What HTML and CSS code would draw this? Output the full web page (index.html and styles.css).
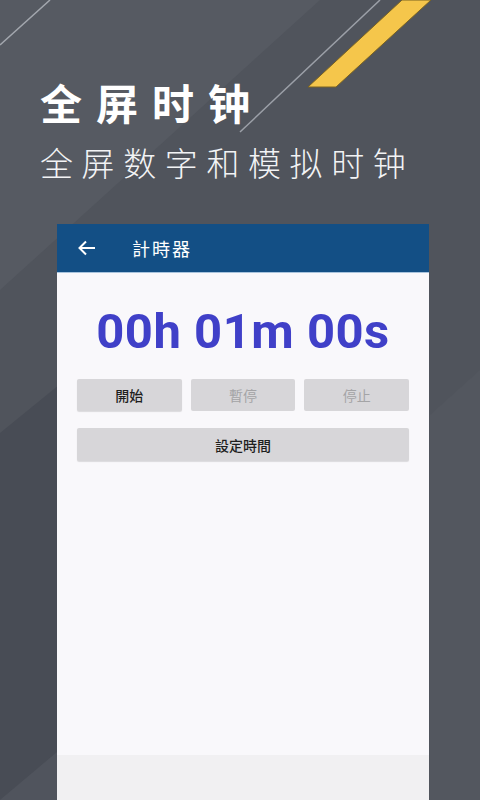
FILE: index.html
```html
<!DOCTYPE html>
<html lang="zh">
<head>
<meta charset="utf-8">
<title>全屏时钟</title>
<link rel="stylesheet" href="styles.css">
</head>
<body>
<div class="screen">
  <svg class="bg" width="480" height="800" viewBox="0 0 480 800" xmlns="http://www.w3.org/2000/svg">
    <polygon points="0,0 480,0 480,800 0,800" fill="#50545c"/>
    <polygon points="0,0 320,0 0,290" fill="#565a62"/>
    <polygon points="0,433 200,270 200,800 0,800" fill="#484c55"/>
    <polygon points="430,415 480,370 480,800 430,800" fill="#53575f"/>
    <polygon points="0,800 57,752 57,800" fill="#50545d"/>
    <line x1="50" y1="0" x2="0" y2="45" stroke="#a3a7ae" stroke-width="1.5"/>
    <line x1="380" y1="0" x2="240" y2="132" stroke="#9ca0a8" stroke-width="1.5"/>
    <polygon points="402,0 431,0 336,87 308,87" fill="#f5c64b" stroke="#7a6322" stroke-width="1"/>
  </svg>
  <div class="hero">
    <h1 class="title">全屏时钟</h1>
    <p class="subtitle">全屏数字和模拟时钟</p>
  </div>
  <div class="phone">
    <div class="appbar">
      <svg class="back" width="18" height="16" viewBox="0 0 18 16" xmlns="http://www.w3.org/2000/svg">
        <path d="M17 8H2M8 1.5L1.5 8L8 14.5" fill="none" stroke="#ffffff" stroke-width="2"/>
      </svg>
      <span class="appbar-title">計時器</span>
    </div>
    <div class="content">
      <div class="timer">00h 01m 00s</div>
      <div class="btn-row">
        <div class="btn">開始</div>
        <div class="btn disabled">暫停</div>
        <div class="btn disabled">停止</div>
      </div>
      <div class="btn wide">設定時間</div>
    </div>
    <div class="navbar"></div>
  </div>
</div>
</body>
</html>
```
FILE: styles.css
```css
* { box-sizing: border-box; }
html, body { margin: 0; padding: 0; }
body { width: 480px; height: 800px; overflow: hidden; background: #4f535b; }
.screen {
  position: relative;
  width: 480px;
  height: 800px;
  display: flex;
  flex-direction: column;
  overflow: hidden;
}
.bg { position: absolute; left: 0; top: 0; }
.hero {
  position: relative;
  padding: 75px 0 0 40px;
  height: 224px;
  color: #ffffff;
  font-family: "Noto Sans CJK SC", sans-serif;
}
.title {
  margin: 0;
  font-size: 42px;
  line-height: 54px;
  font-weight: 700;
  letter-spacing: 14px;
}
.subtitle {
  margin: 13px 0 0 0;
  font-size: 33px;
  line-height: 40px;
  font-weight: 300;
  letter-spacing: 8.6px;
  color: #f2f3f5;
}
.phone {
  position: relative;
  margin-left: 57px;
  width: 372px;
  flex: 1;
  display: flex;
  flex-direction: column;
  background: #f9f8fb;
}
.appbar {
  height: 49px;
  background: #134f85;
  display: flex;
  align-items: center;
  padding-left: 21px;
  border-bottom: 1px solid #a9c4dd;
}
.back { display: block; }
.appbar-title {
  margin-left: 36px;
  color: #ffffff;
  font-family: "Noto Sans CJK TC", sans-serif;
  font-size: 18px;
  letter-spacing: 2px;
}
.content {
  flex: 1;
  padding: 0 20px 0 20px;
  display: flex;
  flex-direction: column;
}
.timer {
  margin-top: 32px;
  text-align: center;
  font-family: Roboto, "Liberation Sans", sans-serif;
  font-weight: 700;
  font-size: 49px;
  line-height: 54px;
  color: #4040c8;
  letter-spacing: 0.5px;
}
.btn-row {
  margin-top: 20px;
  display: flex;
  gap: 9px;
}
.btn {
  flex: 1;
  height: 32px;
  background: #d7d6d9;
  border-radius: 2px;
  box-shadow: 0 1px 1px rgba(0,0,0,0.12);
  display: flex;
  align-items: center;
  justify-content: center;
  font-family: "Noto Sans CJK TC", sans-serif;
  font-size: 14px;
  font-weight: 500;
  color: #1f1f1f;
}
.btn.disabled { color: #a4a4a6; box-shadow: none; font-weight: 400; }
.btn.wide { flex: none; margin-top: 17px; height: 33px; }
.navbar {
  height: 45px;
  background: #f1f0f2;
}
```
